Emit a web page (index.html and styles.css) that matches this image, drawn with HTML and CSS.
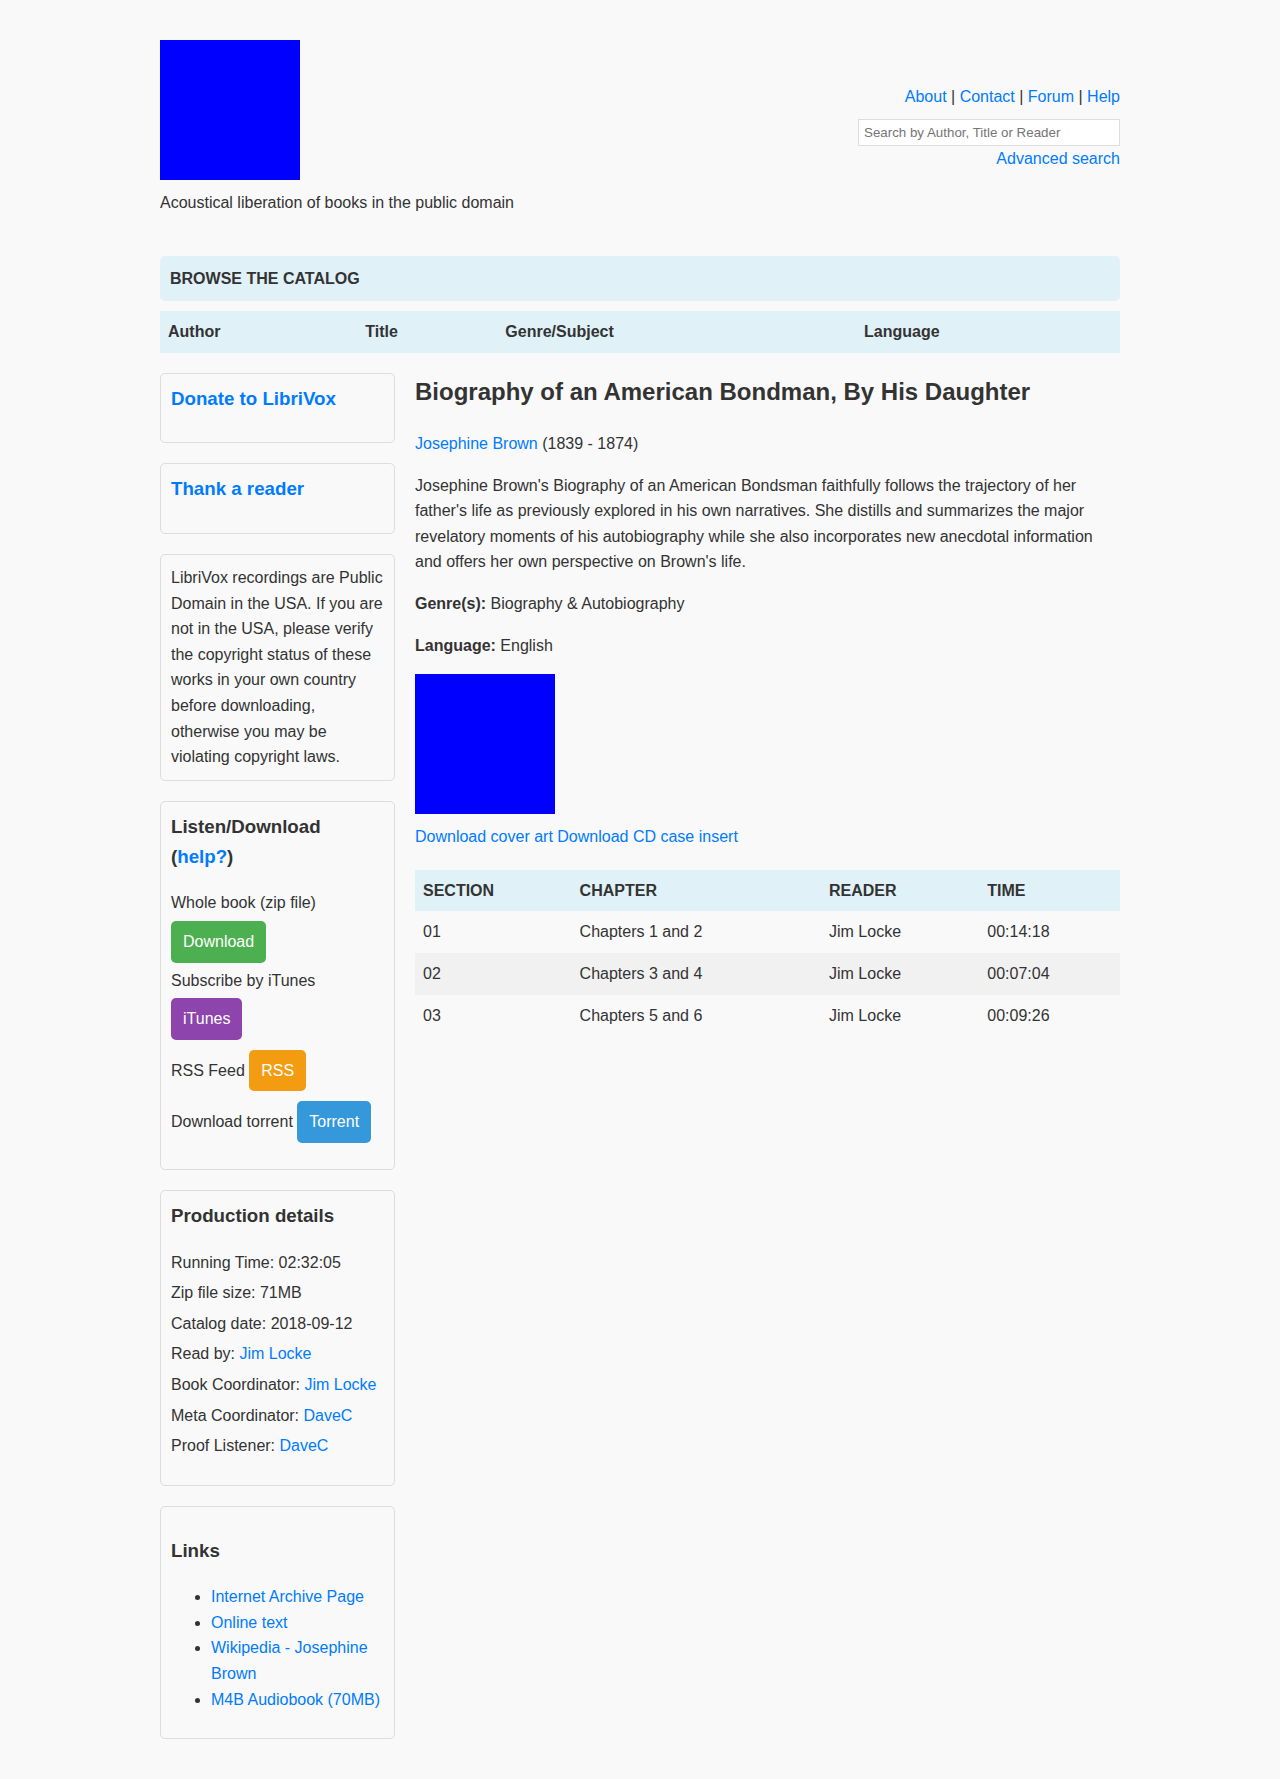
FILE: index.html
```html
<!DOCTYPE html>
<html lang="en">
<head>
<meta charset="utf-8">
<meta name="viewport" content="width=device-width, initial-scale=1">
<title>Biography of an American Bondman, By His Daughter | LibriVox</title>
<link rel="stylesheet" href="styles.css">
</head>
<body>
<div class="container">
  <header class="header">
    <div class="brand">
      <div class="picture"></div>
      <div class="tagline">Acoustical liberation of books in the public domain</div>
    </div>
    <div class="header-side">
      <nav class="header-nav"><a href="#">About</a> | <a href="#">Contact</a> | <a href="#">Forum</a> | <a href="#">Help</a></nav>
      <input class="search" type="text" aria-label="Search" placeholder="Search by Author, Title or Reader">
      <a href="#">Advanced search</a>
    </div>
  </header>

  <div class="catalog-title">BROWSE THE CATALOG</div>
  <table class="table catalog">
    <thead>
      <tr><th>Author</th><th>Title</th><th>Genre/Subject</th><th>Language</th></tr>
    </thead>
  </table>

  <div class="columns">
    <aside class="sidebar">
      <section class="box"><h3 class="box-title"><a href="#">Donate to LibriVox</a></h3></section>
      <section class="box"><h3 class="box-title"><a href="#">Thank a reader</a></h3></section>
      <section class="box">LibriVox recordings are Public Domain in the USA. If you are not in the USA, please verify the copyright status of these works in your own country before downloading, otherwise you may be violating copyright laws.</section>
      <section class="box">
        <h3 class="box-title">Listen/Download (<a href="#">help?</a>)</h3>
        <ul class="plain-list">
          <li>Whole book (zip file) <a class="button button-download" href="#">Download</a></li>
          <li>Subscribe by iTunes <a class="button button-itunes" href="#">iTunes</a></li>
          <li>RSS Feed <a class="button button-rss" href="#">RSS</a></li>
          <li>Download torrent <a class="button button-torrent" href="#">Torrent</a></li>
        </ul>
      </section>
      <section class="box">
        <h3 class="box-title">Production details</h3>
        <ul class="plain-list">
          <li>Running Time: 02:32:05</li>
          <li>Zip file size: 71MB</li>
          <li>Catalog date: 2018-09-12</li>
          <li>Read by: <a href="#">Jim Locke</a></li>
          <li>Book Coordinator: <a href="#">Jim Locke</a></li>
          <li>Meta Coordinator: <a href="#">DaveC</a></li>
          <li>Proof Listener: <a href="#">DaveC</a></li>
        </ul>
      </section>
      <section class="box">
        <h3>Links</h3>
        <ul>
          <li><a href="#">Internet Archive Page</a></li>
          <li><a href="#">Online text</a></li>
          <li><a href="#">Wikipedia - Josephine Brown</a></li>
          <li><a href="#">M4B Audiobook (70MB)</a></li>
        </ul>
      </section>
    </aside>

    <main>
      <h2 class="book-title">Biography of an American Bondman, By His Daughter</h2>
      <p><a href="#">Josephine Brown</a> (1839 - 1874)</p>
      <p>Josephine Brown's Biography of an American Bondsman faithfully follows the trajectory of her father's life as previously explored in his own narratives. She distills and summarizes the major revelatory moments of his autobiography while she also incorporates new anecdotal information and offers her own perspective on Brown's life.</p>
      <p><strong>Genre(s):</strong> Biography &amp; Autobiography</p>
      <p><strong>Language:</strong> English</p>
      <div class="picture"></div>
      <div><a href="#">Download cover art</a> <a href="#">Download CD case insert</a></div>
      <table class="table chapters">
        <thead>
          <tr><th>SECTION</th><th>CHAPTER</th><th>READER</th><th>TIME</th></tr>
        </thead>
        <tbody>
          <tr><td>01</td><td>Chapters 1 and 2</td><td>Jim Locke</td><td>00:14:18</td></tr>
          <tr><td>02</td><td>Chapters 3 and 4</td><td>Jim Locke</td><td>00:07:04</td></tr>
          <tr><td>03</td><td>Chapters 5 and 6</td><td>Jim Locke</td><td>00:09:26</td></tr>
        </tbody>
      </table>
    </main>
  </div>
</div>
</body>
</html>
```
FILE: styles.css
```css
body {
  margin: 0;
  background: #f9f9f9;
  color: #333;
  font-family: "Liberation Sans", Arial, sans-serif;
  line-height: 1.6;
}

a {
  color: #007bff;
  text-decoration: none;
}

.container {
  max-width: 960px;
  margin: 0 auto;
  padding: 20px;
}

/* Header */
.header {
  display: flex;
  justify-content: space-between;
  align-items: center;
  padding: 20px 0;
  margin-bottom: 20px;
}

.picture {
  width: 140px;
  height: 140px;
  margin-bottom: 10px;
  background: #00f;
}

.header-side {
  text-align: right;
}

.header-nav {
  margin-bottom: 10px;
}

.search {
  display: block;
  width: 250px;
  padding: 5px;
  border: 1px solid #ddd;
  background: #fff;
  font-family: inherit;
}

/* Catalog */
.catalog-title {
  padding: 10px;
  border-radius: 5px;
  background: #e0f1f8;
  font-weight: bold;
}

.table {
  width: 100%;
  border-collapse: collapse;
}

.table th,
.table td {
  padding: 8px;
  text-align: left;
}

.table th {
  background: #e0f1f8;
}

.table tbody tr:nth-child(even) {
  background: #f1f1f1;
}

.catalog {
  margin-top: 10px;
}

.chapters {
  margin-top: 20px;
}

/* Two-column body */
.columns {
  display: grid;
  grid-template-columns: 1fr 3fr;
  gap: 20px;
  margin-top: 20px;
}

.book-title {
  margin-top: 0;
}

/* Sidebar */
.box {
  margin-bottom: 20px;
  padding: 10px;
  border: 1px solid #ddd;
  border-radius: 5px;
}

.box-title {
  margin-top: 0;
}

.plain-list {
  margin: 0 0 16px;
  padding: 0;
  list-style: none;
}

.plain-list li {
  margin-bottom: 5px;
}

.button {
  display: inline-block;
  margin-top: 5px;
  padding: 8px 12px;
  border-radius: 5px;
  color: #fff;
}

.button-download { background: #4caf50; }
.button-itunes { background: #8e44ad; }
.button-rss { background: #f39c12; }
.button-torrent { background: #3498db; }
```
